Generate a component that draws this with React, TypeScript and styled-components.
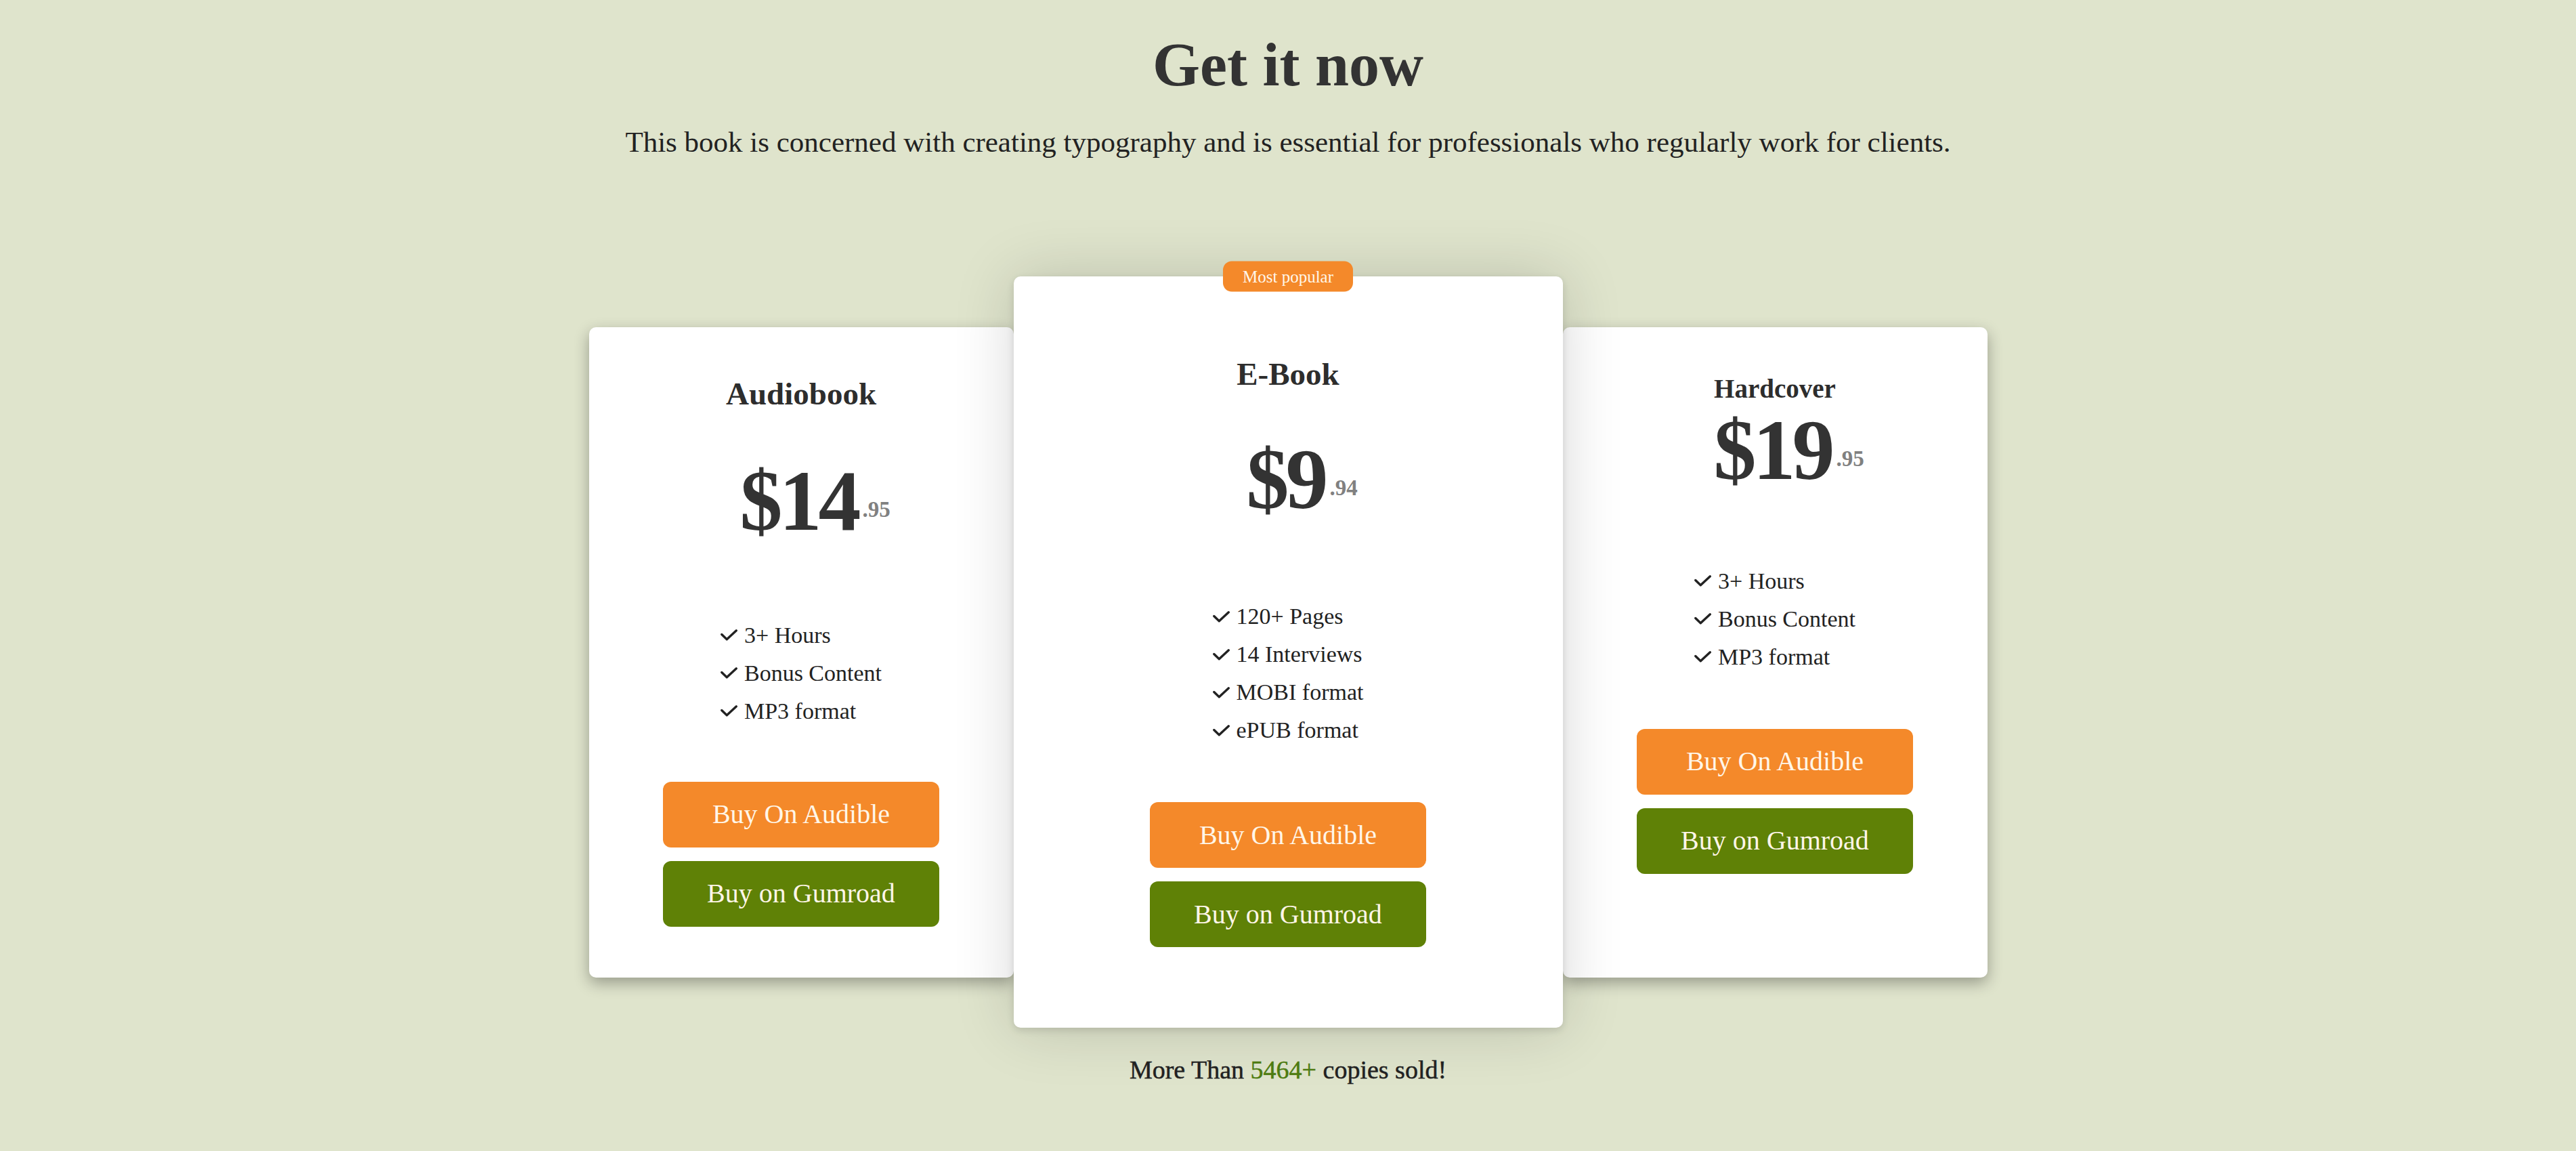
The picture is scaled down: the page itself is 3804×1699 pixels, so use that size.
import React from "react";
import styled, { createGlobalStyle } from "styled-components";

const GlobalStyle = createGlobalStyle`
  html, body {
    margin: 0;
    padding: 0;
    background: #dfe4cc;
  }
  body {
    font-family: "Liberation Serif", "Times New Roman", serif;
    color: #2b2b2b;
  }
  * { box-sizing: border-box; }
`;

const ORANGE = "#f4892a";
const GREEN = "#5f8106";
const CREAM = "#fff6e8";

const Page = styled.main`
  min-height: 100vh;
  padding-top: 51px;
  display: flex;
  flex-direction: column;
  align-items: center;
  background: #dfe4cc;
`;

const Heading = styled.h1`
  margin: 0;
  font-size: 90px;
  line-height: 1;
  font-weight: 700;
  color: #333333;
`;

const Subtitle = styled.p`
  margin: 47px 0 0;
  font-size: 43px;
  line-height: 1;
  color: #222222;
`;

const CardsRow = styled.section`
  margin-top: 177px;
  display: flex;
  justify-content: center;
  align-items: center;
`;

const Card = styled.article<{ $featured?: boolean; $padTop: number }>`
  position: relative;
  width: ${(p) => (p.$featured ? 811 : 627)}px;
  height: ${(p) => (p.$featured ? 1109 : 960)}px;
  padding-top: ${(p) => p.$padTop}px;
  background: #ffffff;
  border-radius: 10px;
  display: flex;
  flex-direction: column;
  align-items: center;
  z-index: ${(p) => (p.$featured ? 2 : 1)};
  box-shadow: ${(p) =>
    p.$featured
      ? "0 0 90px rgba(0,0,0,0.16), 0 4px 12px rgba(0,0,0,0.12)"
      : "0 8px 22px rgba(0,0,0,0.32)"};
`;

const Badge = styled.span`
  position: absolute;
  top: 0;
  left: 50%;
  transform: translate(-50%, -50%);
  height: 45px;
  padding: 0 29px;
  display: flex;
  align-items: center;
  border-radius: 13px;
  background: ${ORANGE};
  color: ${CREAM};
  font-size: 25px;
  line-height: 1;
  white-space: nowrap;
`;

const Title = styled.h2<{ $size: number }>`
  margin: 0;
  font-size: ${(p) => p.$size}px;
  line-height: 1;
  font-weight: 700;
  color: #2d2d2d;
`;

const Price = styled.div<{ $gap: number }>`
  margin-top: ${(p) => p.$gap}px;
  font-size: 126px;
  line-height: 1;
  font-weight: 700;
  color: #333333;
  letter-spacing: -0.04em;
  white-space: nowrap;
`;

const Cents = styled.span`
  display: inline-block;
  width: 0;
  margin-left: 7px;
  vertical-align: 19px;
  font-size: 33px;
  line-height: 1;
  letter-spacing: 0;
  color: #808080;
  white-space: nowrap;
`;

const Features = styled.ul<{ $gap: number }>`
  margin: ${(p) => p.$gap}px 0 0;
  padding: 0;
  list-style: none;
`;

const Feature = styled.li`
  height: 56px;
  display: flex;
  align-items: center;
  gap: 10px;
  font-size: 34px;
  line-height: 1;
  color: #222222;
  white-space: nowrap;
`;

const Buttons = styled.div<{ $gap: number }>`
  margin-top: ${(p) => p.$gap}px;
  width: 408px;
  display: flex;
  flex-direction: column;
  gap: 20px;
`;

const BuyButton = styled.a<{ $tone: "orange" | "green" }>`
  height: 97px;
  display: flex;
  align-items: center;
  justify-content: center;
  border-radius: 12px;
  background: ${(p) => (p.$tone === "orange" ? ORANGE : GREEN)};
  color: ${CREAM};
  font-size: 40px;
  line-height: 1;
  text-decoration: none;
  cursor: pointer;
`;

const Footer = styled.p`
  margin: 43px 0 0;
  font-size: 38px;
  line-height: 1;
  color: #222222;
  -webkit-text-stroke: 0.5px #222222;
`;

const Count = styled.span`
  color: #4f7d12;
  -webkit-text-stroke: 0.5px #4f7d12;
`;

const Check = () => (
  <svg width="25" height="17" viewBox="0 0 25 17" fill="none" aria-hidden="true">
    <polyline
      points="1.8,7.5 9.3,14.8 23.3,1.8"
      stroke="#222"
      strokeWidth="3.4"
      strokeLinecap="round"
      strokeLinejoin="round"
    />
  </svg>
);

type Plan = {
  name: string;
  dollars: string;
  cents: string;
  features: string[];
  featured?: boolean;
  padTop: number;
  titleSize: number;
  priceGap: number;
  listGap: number;
  buttonGap: number;
};

const plans: Plan[] = [
  {
    name: "Audiobook",
    dollars: "$14",
    cents: ".95",
    features: ["3+ Hours", "Bonus Content", "MP3 format"],
    padTop: 75,
    titleSize: 47,
    priceGap: 72,
    listGap: 107,
    buttonGap: 76,
  },
  {
    name: "E-Book",
    dollars: "$9",
    cents: ".94",
    features: ["120+ Pages", "14 Interviews", "MOBI format", "ePUB format"],
    featured: true,
    padTop: 121,
    titleSize: 47,
    priceGap: 69,
    listGap: 111,
    buttonGap: 78,
  },
  {
    name: "Hardcover",
    dollars: "$19",
    cents: ".95",
    features: ["3+ Hours", "Bonus Content", "MP3 format"],
    padTop: 71,
    titleSize: 39,
    priceGap: 9,
    listGap: 102,
    buttonGap: 78,
  },
];

export default function App() {
  return (
    <>
      <GlobalStyle />
      <Page>
        <Heading>Get it now</Heading>
        <Subtitle>
          This book is concerned with creating typography and is essential for professionals who
          regularly work for clients.
        </Subtitle>
        <CardsRow>
          {plans.map((plan) => (
            <Card key={plan.name} $featured={plan.featured} $padTop={plan.padTop}>
              {plan.featured && <Badge>Most popular</Badge>}
              <Title $size={plan.titleSize}>{plan.name}</Title>
              <Price $gap={plan.priceGap}>
                {plan.dollars}
                <Cents>{plan.cents}</Cents>
              </Price>
              <Features $gap={plan.listGap}>
                {plan.features.map((f) => (
                  <Feature key={f}>
                    <Check />
                    {f}
                  </Feature>
                ))}
              </Features>
              <Buttons $gap={plan.buttonGap}>
                <BuyButton $tone="orange">Buy On Audible</BuyButton>
                <BuyButton $tone="green">Buy on Gumroad</BuyButton>
              </Buttons>
            </Card>
          ))}
        </CardsRow>
        <Footer>
          More Than <Count>5464+</Count> copies sold!
        </Footer>
      </Page>
    </>
  );
}
